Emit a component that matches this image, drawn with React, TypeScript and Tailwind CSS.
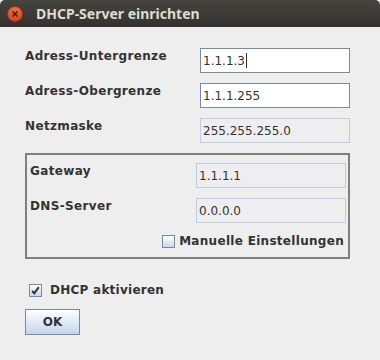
import React from "react";

const dlg = { fontFamily: '"DejaVu Sans", sans-serif' };

function Field({ value, enabled, caret }: { value: string; enabled: boolean; caret?: boolean }) {
  return (
    <div
      className={
        "w-[150px] h-[25px] flex items-center pl-[2px] text-[12px] text-[#333333] " +
        (enabled ? "border border-[#7a8a99] bg-white" : "border border-[#b8cfe5] bg-[#eeeeee]")
      }
      style={dlg}
    >
      <span>{value}</span>
      {caret && <span className="w-px h-[15px] bg-[#333333] ml-[1px]" />}
    </div>
  );
}

function Row({ label, value, enabled, caret }: { label: string; value: string; enabled: boolean; caret?: boolean }) {
  return (
    <div className="flex items-start h-[25px]">
      <div className="flex-1 font-bold text-[12px] tracking-[0.35px] leading-[15px] pt-[1px] text-[#333333]" style={dlg}>
        {label}
      </div>
      <Field value={value} enabled={enabled} caret={caret} />
    </div>
  );
}

function CheckBox({ checked }: { checked: boolean }) {
  return (
    <div className="w-[13px] h-[13px] border border-[#7a8a99] bg-gradient-to-b from-[#ffffff] to-[#c8d8ea] flex items-center justify-center">
      {checked && (
        <svg width="9" height="9" viewBox="0 0 9 9">
          <path d="M1.2 4.8 L3.3 7.3 L7.8 1.2" stroke="#333333" strokeWidth="2" fill="none" />
        </svg>
      )}
    </div>
  );
}

export default function App() {
  return (
    <div className="w-[380px] h-[360px] bg-[#eeeeee] flex flex-col overflow-hidden">
      <div className="h-[27px] rounded-t-[5px] bg-gradient-to-b from-[#45443f] to-[#33322e] flex items-center">
        <div className="ml-[7px] w-[16px] h-[16px] rounded-full bg-gradient-to-b from-[#f26b3a] to-[#d8461d] border border-[#9e3416] flex items-center justify-center">
          <svg width="6" height="6" viewBox="0 0 6 6">
            <path d="M0.5 0.5 L5.5 5.5 M5.5 0.5 L0.5 5.5" stroke="#3a1608" strokeWidth="1.2" />
          </svg>
        </div>
        <div
          className="ml-[13px] text-[14px] font-bold text-[#dfdbd2]"
          style={{ fontFamily: '"Noto Sans", "Open Sans", sans-serif' }}
        >
          DHCP-Server einrichten
        </div>
      </div>
      <div className="flex flex-col pl-[25px] pr-[30px] pt-[21px]">
        <div className="flex flex-col gap-[10px]">
          <Row label="Adress-Untergrenze" value="1.1.1.3" enabled caret />
          <Row label="Adress-Obergrenze" value="1.1.1.255" enabled />
          <Row label="Netzmaske" value="255.255.255.0" enabled={false} />
        </div>
        <div className="mt-[10px] h-[106px] border-2 border-[#808080] flex flex-col pl-[3px] pr-[2px] pt-[8px]">
          <div className="flex flex-col gap-[10px]">
            <Row label="Gateway" value="1.1.1.1" enabled={false} />
            <Row label="DNS-Server" value="0.0.0.0" enabled={false} />
          </div>
          <div className="flex items-center justify-end gap-[4px] mt-[11px] pr-[2px]">
            <CheckBox checked={false} />
            <span className="font-bold text-[12px] tracking-[0.3px] text-[#333333] leading-[15px]" style={dlg}>
              Manuelle Einstellungen
            </span>
          </div>
        </div>
        <div className="flex items-center gap-[8px] mt-[24px] ml-[4px]">
          <CheckBox checked />
          <span className="font-bold text-[12px] tracking-[0.25px] text-[#333333] leading-[15px]" style={dlg}>
            DHCP aktivieren
          </span>
        </div>
        <div className="mt-[11px]">
          <div
            className="w-[55px] h-[26px] border border-[#7a8a99] bg-gradient-to-b from-[#ffffff] to-[#c3d5ea] flex items-center justify-center font-bold text-[12px] text-[#333333]"
            style={dlg}
          >
            OK
          </div>
        </div>
      </div>
    </div>
  );
}
